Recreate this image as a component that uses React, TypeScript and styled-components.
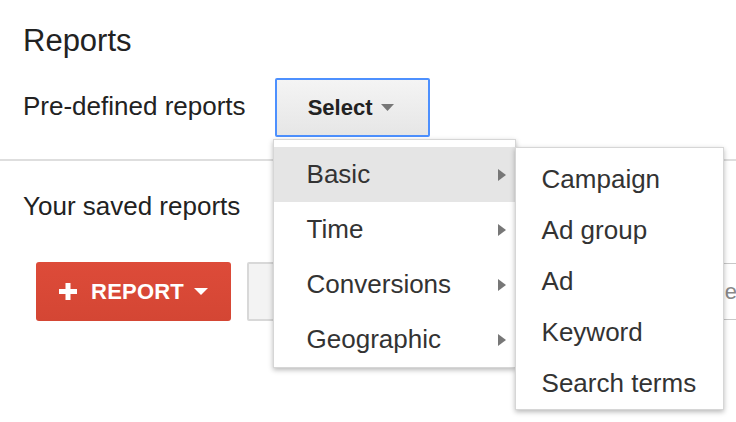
import React from "react";
import styled, { createGlobalStyle } from "styled-components";

const Global = createGlobalStyle`
  html, body { margin: 0; padding: 0; background: #fff; overflow: hidden; }
  body { font-family: "Liberation Sans", Arial, sans-serif; color: #222; }
  * { box-sizing: border-box; }
`;

const Page = styled.div`
  width: 736px;
  height: 422px;
  position: relative;
  padding-top: 23px;
  overflow: hidden;
`;

const Title = styled.h1`
  margin: 0 0 0 23px;
  font-size: 31px;
  line-height: 36px;
  font-weight: normal;
  color: #222;
`;

const PredefRow = styled.div`
  display: flex;
  align-items: center;
  gap: 29px;
  margin: 19px 0 0 23px;
`;

const Label = styled.div`
  font-size: 26px;
  line-height: 30px;
  color: #222;
  padding-bottom: 4px;
`;

const SelectWrap = styled.div`
  position: relative;
`;

const SelectButton = styled.button`
  width: 155px;
  height: 59px;
  display: flex;
  align-items: center;
  justify-content: center;
  gap: 9px;
  border: 2px solid #4d90fe;
  border-radius: 2px;
  background: linear-gradient(#f4f4f4, #e6e6e6);
  font-family: "Liberation Sans", Arial, sans-serif;
  font-weight: bold;
  font-size: 22px;
  color: #222;
  padding: 0 2px 0 0;
  cursor: pointer;
`;

const Divider = styled.div`
  height: 2px;
  background: #dedede;
  margin-top: 22px;
`;

const SavedLabel = styled(Label)`
  margin: 30px 0 0 23px;
  padding: 0;
`;

const Toolbar = styled.div`
  display: flex;
  align-items: flex-start;
  margin: 41px 0 0 36px;
  gap: 16px;
`;

const RedButton = styled.button`
  flex: none;
  width: 195px;
  height: 59px;
  border: none;
  border-radius: 3px;
  background: linear-gradient(#dd4b39, #d44634);
  color: #fff;
  display: flex;
  align-items: center;
  justify-content: center;
  font-family: "Liberation Sans", Arial, sans-serif;
  font-weight: bold;
  font-size: 22px;
  padding: 0;
`;

const RedLabel = styled.span`
  margin: 0 10px 0 14px;
  letter-spacing: 0.2px;
`;

const GrayButton = styled.button`
  flex: none;
  width: 70px;
  height: 59px;
  border: 2px solid #d8d8d8;
  border-radius: 2px;
  background: #f3f3f3;
`;

const SearchInput = styled.input`
  flex: none;
  width: 416px;
  height: 57px;
  margin-top: 1px;
  border: none;
  border-top: 1px solid #c8c8c8;
  border-bottom: 1px solid #c8c8c8;
  padding: 0 12px;
  text-align: right;
  font-family: "Liberation Sans", Arial, sans-serif;
  font-size: 22px;
  &::placeholder { color: #888; }
`;

const Menu = styled.div<{ $width: number }>`
  position: absolute;
  width: ${(p) => p.$width}px;
  background: #fff;
  border: 1px solid rgba(0, 0, 0, 0.16);
  box-shadow: 0 2px 5px rgba(0, 0, 0, 0.28);
  padding-top: 7px;
  z-index: 10;
`;

const MainMenu = styled(Menu)`
  left: -2px;
  top: calc(100% + 2px);
`;

const SubMenu = styled(Menu)`
  left: 241px;
  top: 7px;
  padding-top: 6px;
  z-index: 11;
`;

const MenuItem = styled.div<{ $h: number; $pl: number; $active?: boolean }>`
  height: ${(p) => p.$h}px;
  display: flex;
  align-items: center;
  justify-content: space-between;
  padding: 0 9px 0 ${(p) => p.$pl}px;
  font-size: 26px;
  color: #333;
  white-space: nowrap;
  background: ${(p) => (p.$active ? "#e5e5e5" : "transparent")};
`;

const Caret = () => (
  <svg width="13" height="7" viewBox="0 0 13 7">
    <path d="M0 0h13L6.5 7z" fill="#777" />
  </svg>
);

const RightCaret = () => (
  <svg width="8" height="12" viewBox="0 0 8 12">
    <path d="M0 0l8 6-8 6z" fill="#777" />
  </svg>
);

const Plus = () => (
  <svg width="18" height="17" viewBox="0 0 18 17">
    <rect x="6.5" y="0" width="5" height="17" fill="#fff" />
    <rect x="0" y="6" width="18" height="5" fill="#fff" />
  </svg>
);

const WhiteCaret = () => (
  <svg width="14" height="7" viewBox="0 0 14 7">
    <path d="M0 0h14L7 7z" fill="#fff" />
  </svg>
);

const mainItems = ["Basic", "Time", "Conversions", "Geographic"];
const subItems = ["Campaign", "Ad group", "Ad", "Keyword", "Search terms"];

export default function App() {
  return (
    <>
      <Global />
      <Page>
        <Title>Reports</Title>
        <PredefRow>
          <Label>Pre-defined reports</Label>
          <SelectWrap>
            <SelectButton>
              Select <Caret />
            </SelectButton>
            <MainMenu $width={243}>
              {mainItems.map((m, i) => (
                <MenuItem key={m} $h={55} $pl={33} $active={i === 0}>
                  {m}
                  <RightCaret />
                </MenuItem>
              ))}
              <SubMenu $width={209}>
                {subItems.map((s) => (
                  <MenuItem key={s} $h={51} $pl={26}>
                    {s}
                  </MenuItem>
                ))}
              </SubMenu>
            </MainMenu>
          </SelectWrap>
        </PredefRow>
        <Divider />
        <SavedLabel>Your saved reports</SavedLabel>
        <Toolbar>
          <RedButton>
            <Plus />
            <RedLabel>REPORT</RedLabel>
            <WhiteCaret />
          </RedButton>
          <GrayButton aria-label="more" />
          <SearchInput placeholder="Search by report name" />
        </Toolbar>
      </Page>
    </>
  );
}
